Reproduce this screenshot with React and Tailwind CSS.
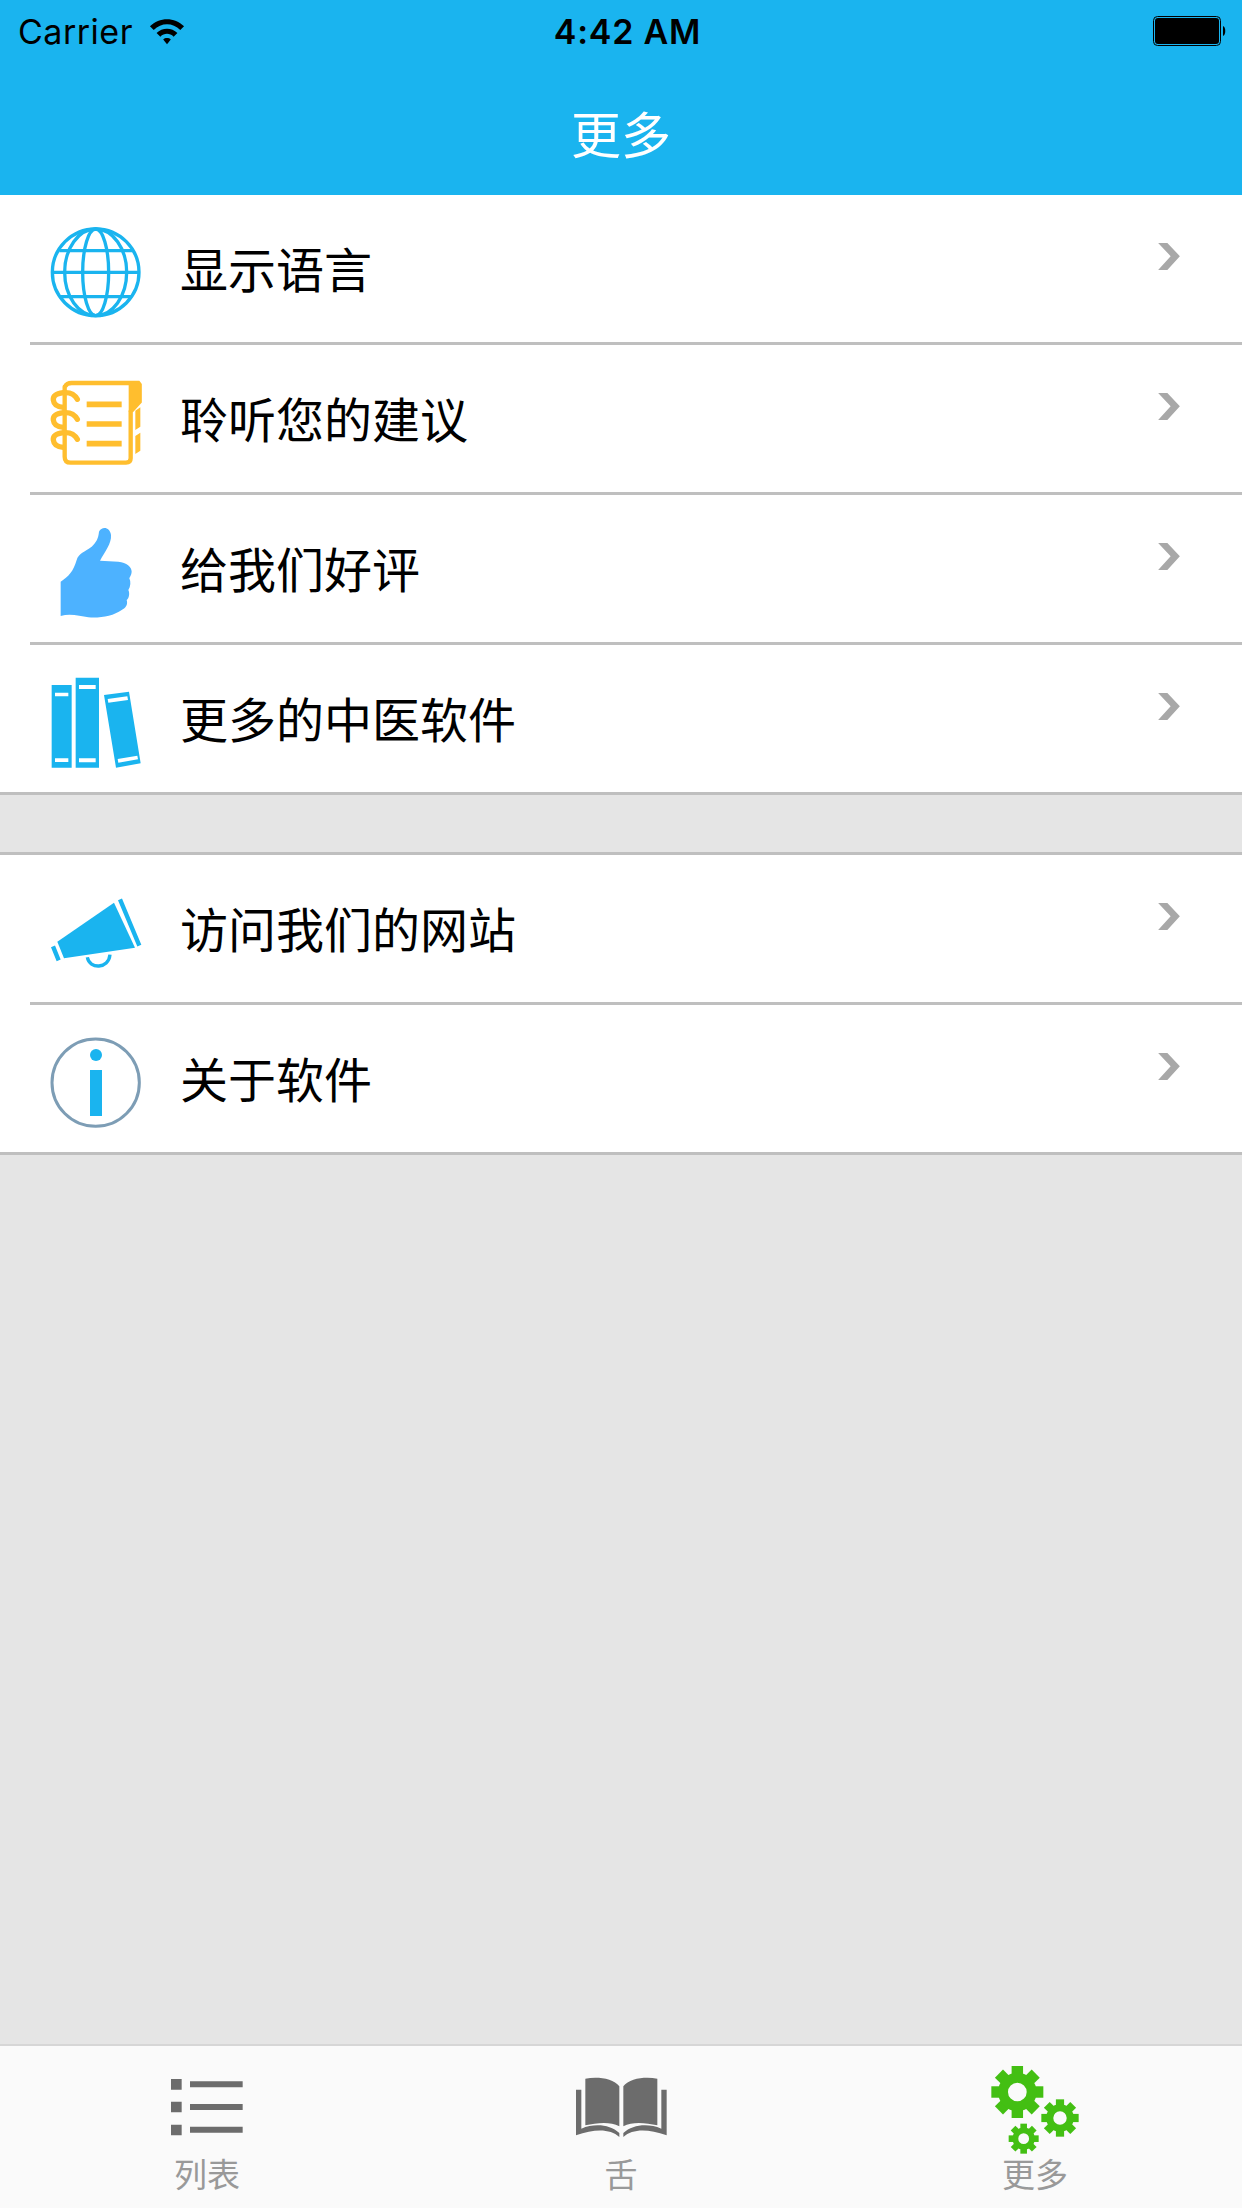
const rows1 = [
  { label: '显示语言', icon: <GlobeIcon /> },
  { label: '聆听您的建议', icon: <NotebookIcon /> },
  { label: '给我们好评', icon: <ThumbIcon /> },
  { label: '更多的中医软件', icon: <BooksIcon /> },
]

const rows2 = [
  { label: '访问我们的网站', icon: <MegaphoneIcon /> },
  { label: '关于软件', icon: <InfoIcon /> },
]

function IconBox({ y, children }) {
  return (
    <svg viewBox={`60 ${y} 270 270`} className="w-[90px] h-[90px] shrink-0 overflow-visible">
      {children}
    </svg>
  )
}

function GlobeIcon() {
  return (
    <IconBox y={51}>
      <g fill="none" stroke="#1ab4ef" strokeWidth="10">
        <circle cx="197" cy="187" r="130" />
        <ellipse cx="197" cy="187" rx="39" ry="130" />
        <ellipse cx="197" cy="187" rx="93" ry="130" />
        <path d="M66 187H328M88 122H306M88 260H306" />
      </g>
    </IconBox>
  )
}

function NotebookIcon() {
  return (
    <IconBox y={501}>
      <g fill="none" stroke="#ffbe2e" strokeLinecap="round">
        <path d="M105 530Q110 519 125 519H325L329 524V575L302 605V745Q302 758 288 758H122Q104 758 104 740V530" strokeWidth="13" fill="none" />
        <path d="M296 522H331V570L296 606Z" fill="#ffbe2e" stroke="none" />
        <path d="M170 583H275M170 642H275M170 701H275" strokeWidth="17" strokeLinecap="butt" />
        <path d="M142 568Q130 545 100 548Q68 552 70 570Q72 590 100 592M142 628Q130 605 100 608Q68 612 70 630Q72 650 100 652M142 688Q130 665 100 668Q68 672 70 690Q72 710 100 712" strokeWidth="16" />
      </g>
      <path d="M316 602L331 592V650L316 660ZM316 678L331 668V722L316 732Z" fill="#ffbe2e" />
    </IconBox>
  )
}

function ThumbIcon() {
  return (
    <IconBox y={51}>
      <path
        d="M92 215C115 200 130 185 140 150C145 130 165 125 185 110C200 95 205 85 207 65C215 48 240 50 243 75C245 100 225 125 210 152L265 155C290 158 305 170 305 185C305 195 298 203 298 205C303 215 302 230 295 240C300 250 297 265 290 270C295 285 285 295 275 300C250 318 210 325 175 322C150 318 120 310 92 318Z"
        fill="#4db2ff"
      />
    </IconBox>
  )
}

function BooksIcon() {
  return (
    <IconBox y={501}>
      <path d="M65 525H125V773H65ZM137 503H207V773H137ZM222 555L297 545L332 760L258 773Z" fill="#1ab4ef" />
      <path d="M75 548H115V559H75ZM75 745H115V756H75ZM147 525H197V537H147ZM147 745H197V757H147ZM233 567L292 559L294 570L235 578ZM263 747L322 737L324 748L265 758Z" fill="#fff" />
    </IconBox>
  )
}

function MegaphoneIcon() {
  return (
    <IconBox y={21}>
      <path d="M82 185L252 68L315 203L102 235Z" fill="#1ab4ef" />
      <path d="M270 58L328 197M69 199L86 241" fill="none" stroke="#1ab4ef" strokeWidth="13" />
      <path d="M172 232C178 268 236 268 240 224" fill="none" stroke="#1ab4ef" strokeWidth="10" />
    </IconBox>
  )
}

function InfoIcon() {
  return (
    <IconBox y={471}>
      <circle cx="197" cy="608" r="131" fill="#fff" stroke="#7d9db5" strokeWidth="9" />
      <circle cx="198" cy="525" r="18" fill="#1ab4ef" />
      <path d="M180 570H216V708H180Z" fill="#1ab4ef" />
    </IconBox>
  )
}

function Chevron() {
  return (
    <svg viewBox="82 68 66 82" className="w-[22px] h-[27px] shrink-0 self-start mt-[48px] ml-auto mr-[62px]">
      <path d="M82 68H110L148 108L110 150H82L120 108Z" fill="#a8a8a8" />
    </svg>
  )
}

function Row({ label, icon, last }) {
  return (
    <div className={last ? '' : 'pl-[30px]'}>
      <div className={`flex items-start h-[150px] border-b-[3px] border-[#bfbfbf] ${last ? 'pl-[50px]' : 'pl-[20px]'}`}>
        <div className="mt-[32px]">{icon}</div>
        <span className="ml-[40px] mt-[39px] text-[48px] leading-[66px] text-black">{label}</span>
        <Chevron />
      </div>
    </div>
  )
}

function Gear({ cx, cy, r }) {
  const angles = [0, 45, 90, 135, 180, 225, 270, 315]
  return (
    <g fill="#43bf13">
      {angles.map((a) => (
        <rect key={a} x={cx - r * 0.22} y={cy - r} width={r * 0.44} height={r * 0.5} transform={`rotate(${a} ${cx} ${cy})`} />
      ))}
      <circle cx={cx} cy={cy} r={r * 0.55} fill="none" stroke="#43bf13" strokeWidth={r * 0.38} />
    </g>
  )
}

function TabItem({ label, x, children }) {
  return (
    <div className="flex-1 flex flex-col items-center">
      <svg viewBox={`${x} 14 390 330`} className="w-[130px] h-[110px]">
        {children}
      </svg>
      <span className="-mt-[3px] text-[33px] leading-[40px] text-[#999999]">{label}</span>
    </div>
  )
}

export default function App() {
  return (
    <div className="w-full h-[2208px] flex flex-col bg-[#e5e5e5] font-['Noto_Sans_CJK_SC',sans-serif]">
      <div className="h-[195px] bg-[#1ab4ef] shrink-0">
        <div className="grid grid-cols-3 items-center h-[62px] pl-[18px] pr-[15px] font-['Inter',sans-serif] text-[34px] text-black">
          <div className="flex items-center gap-[16px]">
            <span className="tracking-[0.5px]">Carrier</span>
            <svg viewBox="0 0 38 28" className="w-[36px] h-[28px]">
              <path d="M1 9C11 -1 27 -1 37 9L33 13C25 5 13 5 5 13Z" />
              <path d="M8 16C14 10 24 10 30 16L26 20C22 16 16 16 12 20Z" />
              <path d="M15 23C17 21 21 21 23 23L19 28Z" />
            </svg>
          </div>
          <span className="justify-self-center font-semibold tracking-[0.8px] pl-[10px]">4:42 AM</span>
          <svg viewBox="0 0 74 30" className="justify-self-end w-[74px] h-[30px]">
            <rect x="0.5" y="0.5" width="67" height="29" rx="4" fill="none" stroke="#000" />
            <rect x="2" y="2" width="64" height="26" rx="3" />
            <path d="M70 10C73 11 73 19 70 20Z" />
          </svg>
        </div>
        <h1 className="mt-[36px] text-center text-[50px] leading-[68px] text-white font-normal">更多</h1>
      </div>

      <div className="bg-white">
        {rows1.map((r, i) => (
          <Row key={r.label} label={r.label} icon={r.icon} last={i === rows1.length - 1} />
        ))}
      </div>

      <div className="mt-[57px] bg-white border-t-[3px] border-[#bfbfbf]">
        {rows2.map((r, i) => (
          <Row key={r.label} label={r.label} icon={r.icon} last={i === rows2.length - 1} />
        ))}
      </div>

      <div className="flex-1" />

      <div className="flex h-[164px] shrink-0 bg-[#fafafa] border-t-2 border-[#d6d6d6]">
        <TabItem label="列表" x={6}>
          <path d="M93 113H125V145H93ZM93 181H125V213H93ZM93 250H125V282H93ZM150 120H308V138H150ZM150 188H308V206H150ZM150 256H308V274H150Z" fill="#6c6c6c" />
        </TabItem>
        <TabItem label="舌" x={-12}>
          <g fill="#6c6c6c">
            <path d="M76 112C110 105 160 110 178 135V255C150 240 110 245 76 252Z" />
            <path d="M292 112C258 105 208 110 190 135V255C218 240 258 245 292 252Z" />
            <path d="M48 145H64V262C105 245 150 250 178 275V287C150 262 105 262 48 282Z" />
            <path d="M320 145H304V262C263 245 218 250 190 275V287C218 262 263 262 320 282Z" />
          </g>
        </TabItem>
        <TabItem label="更多" x={0}>
          <Gear cx={142} cy={152} r={78} />
          <Gear cx={270} cy={230} r={56} />
          <Gear cx={161} cy={292} r={45} />
        </TabItem>
      </div>
    </div>
  )
}
